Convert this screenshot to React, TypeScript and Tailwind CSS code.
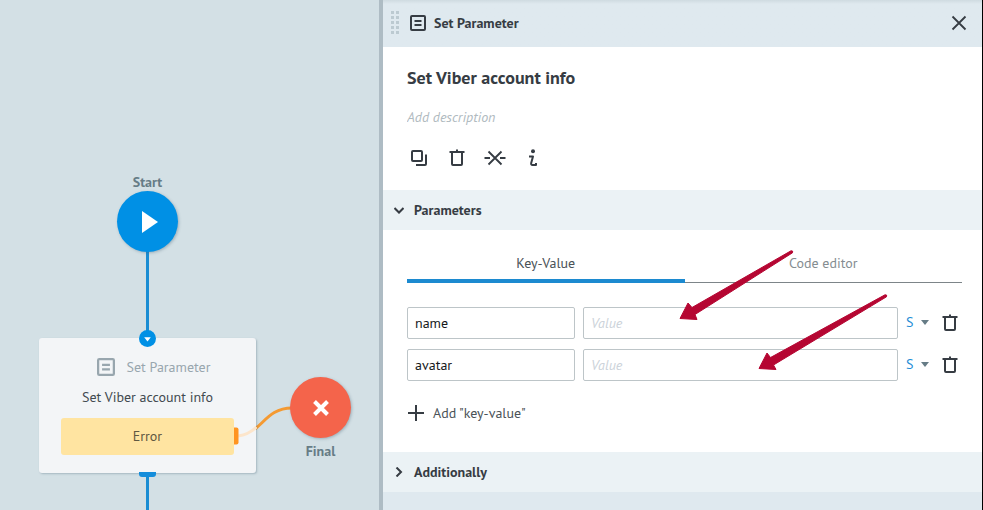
import { useState } from "react";

type Pair = { id: number; key: string; value: string };

function ListIcon({ className }: { className: string }) {
  return (
    <svg className={className} viewBox="0 0 16 16" fill="none" stroke="currentColor" strokeWidth="2" aria-hidden="true">
      <rect x="1" y="1" width="14" height="14" rx="1" />
      <path d="M4.500 6h7M4.500 10h7" />
    </svg>
  );
}

function TrashIcon() {
  return (
    <svg className="h-[18px] w-4" viewBox="0 0 16 18" fill="none" stroke="currentColor" strokeWidth="2" aria-hidden="true">
      <path d="M0.500 3h15M8 0.500v3" />
      <path d="M3 4v11q0 1 1 1h8q1 0 1-1V4" />
    </svg>
  );
}

function CopyIcon() {
  return (
    <svg className="size-4" viewBox="0 0 16 16" fill="none" stroke="currentColor" strokeWidth="2" aria-hidden="true">
      <rect x="1" y="1" width="10" height="10" rx="1" />
      <path d="M15 4.500V14q0 1-1 1H5" />
    </svg>
  );
}

function DetachIcon() {
  return (
    <svg className="h-4 w-[22px]" viewBox="0 0 22 16" fill="none" stroke="currentColor" strokeWidth="2" aria-hidden="true">
      <path d="M4.500 1.500l13 13M17.500 1.500l-13 13" strokeWidth="1.800" />
      <path d="M0.500 8H6M16 8h5.500" />
    </svg>
  );
}

function InfoIcon() {
  return (
    <svg className="h-[18px] w-2.5" viewBox="0 0 10 18" fill="none" stroke="currentColor" strokeWidth="2" aria-hidden="true">
      <circle cx="5" cy="2.300" r="2" fill="currentColor" stroke="none" />
      <path d="M1 7.500H5L3.200 14q-.4 2 1.300 2H8V14" strokeLinejoin="round" />
    </svg>
  );
}

function Canvas() {
  return (
    <main className="relative w-[379px] shrink-0 overflow-hidden bg-[#d3e0e5]">
      <svg className="absolute inset-0 h-full w-full" aria-hidden="true">
        <path d="M147.500 240V340M147.500 474V2000" stroke="#1a8dd3" strokeWidth="3" />
        <path d="M238 436C262 434 264 408 292 408" fill="none" stroke="#f49a32" strokeWidth="3" />
      </svg>

      <div className="absolute top-[173px] left-[117px] flex w-[61px] flex-col items-center">
        <span className="text-sm leading-[18px] font-bold text-[#667c86]">Start</span>
        <div className="flex size-[61px] items-center justify-center rounded-full bg-[#0090e5] shadow-[1px_1px_3px_rgba(60,90,110,0.35)]">
          <svg className="ml-1 h-[22px] w-4" viewBox="0 0 16 22" fill="white" aria-hidden="true">
            <path d="M0 0l16 11L0 22z" />
          </svg>
        </div>
      </div>

      <section className="absolute top-[338px] left-[39px] flex w-[217px] flex-col rounded-[3px] bg-[#f3f5f7] px-[22px] pt-[18px] pb-[18px] text-sm shadow-[1px_1px_2px_rgba(60,90,110,0.3)]">
        <header className="flex items-center justify-center gap-3 pl-3 text-[#98a6ae]">
          <ListIcon className="size-[18px]" />
          <span className="leading-[22px]">Set Parameter</span>
        </header>
        <p className="mt-2 text-center leading-[22px] text-[#424a50]">Set Viber account info</p>
        <div className="mt-2.5 rounded-[3px] bg-[#ffe4a1] text-center leading-[37px] text-[#5f5842]">Error</div>
      </section>
      <svg className="absolute top-[417px] left-[233px] h-[38px] w-6" viewBox="233 417 24 38" aria-hidden="true">
        <path d="M238 436Q249 434.500 256.500 427" fill="none" stroke="#fce5cb" strokeWidth="3" />
        <path d="M234 427.500h2.500q2 0 2 2v13q0 2-2 2H234z" fill="#ff9420" />
      </svg>
      <svg className="absolute top-[330px] left-[139px] size-[17px]" viewBox="0 0 17 17" aria-hidden="true">
        <circle cx="8.500" cy="8.500" r="8.500" fill="#0090e5" />
        <path d="M5.200 7.300h6.600L8.500 11.500z" fill="white" />
      </svg>
      <div className="absolute top-[472px] left-[139px] h-[5px] w-[17px] rounded-b-[3px] bg-[#148ddb]" />

      <div className="absolute top-[377px] left-[290px] flex w-[61px] flex-col items-center gap-1">
        <div className="flex size-[61px] items-center justify-center rounded-full bg-[#f4644b] shadow-[1px_1px_3px_rgba(60,90,110,0.35)]">
          <svg className="size-4" viewBox="0 0 16 16" stroke="white" strokeWidth="4" aria-hidden="true">
            <path d="M1.500 1.500l13 13M14.500 1.500l-13 13" />
          </svg>
        </div>
        <span className="text-sm leading-[18px] font-bold text-[#667c86]">Final</span>
      </div>
    </main>
  );
}

function PairRow({ pair }: { pair: Pair }) {
  return (
    <li className="flex items-center">
      <input
        aria-label="Key"
        defaultValue={pair.key}
        className="h-8 w-[168px] rounded-[2px] border border-[#bdc5c8] bg-white px-[7px] text-sm text-[#16191c] outline-none"
      />
      <input
        aria-label={`Value of ${pair.key}`}
        placeholder="Value"
        defaultValue={pair.value}
        className="ml-2 h-8 min-w-0 flex-1 rounded-[2px] border border-[#bdc5c8] bg-white px-[7px] text-sm outline-none placeholder:text-[#ccd3da] placeholder:italic"
      />
      <div className="relative ml-2 w-6 pb-0.5">
        <select aria-label="Type" className="block w-full appearance-none bg-transparent text-sm leading-5 text-[#1f8dd6] outline-none">
          <option>S</option>
        </select>
        <svg className="pointer-events-none absolute top-2 right-px h-[5px] w-2" viewBox="0 0 8 5" fill="#667c86" aria-hidden="true">
          <path d="M0 0h8L4 5z" />
        </svg>
      </div>
      <button type="button" aria-label="Delete" className="mr-1 ml-3 flex">
        <TrashIcon />
      </button>
    </li>
  );
}

export default function App() {
  const [pairs, setPairs] = useState<Pair[]>([
    { id: 1, key: "name", value: "" },
    { id: 2, key: "avatar", value: "" },
  ]);

  return (
    <div className="flex min-h-screen bg-[#d3e0e5] font-['PT_Sans','Noto_Sans',sans-serif] text-sm text-[#363c43]">
      <Canvas />
      <aside className="min-w-0 flex-1 border-r border-l-4 border-r-black border-l-[#aebcc4] bg-[#dfe9ef]">
        <header className="flex h-[47px] items-center bg-linear-to-b from-[#cfdbe1] to-[#dfe9ef] to-[4px] pr-[15px] pb-0.5 pl-2">
          <svg className="h-6 w-2" viewBox="0 0 8 24" fill="#bccad1" aria-hidden="true">
            {[0, 5, 10, 15, 20].map((y) => (
              <path key={y} d={`M0 ${y}h3v3h-3zM5 ${y}h3v3h-3z`} />
            ))}
          </svg>
          <ListIcon className="ml-[11px] size-4" />
          <h2 className="ml-2 flex-1 font-bold">Set Parameter</h2>
          <button type="button" aria-label="Close" className="flex">
            <svg className="size-4" viewBox="0 0 16 16" stroke="currentColor" strokeWidth="1.800" aria-hidden="true">
              <path d="M1.500 1.500l13 13M14.500 1.500l-13 13" />
            </svg>
          </button>
        </header>

        <section className="flex h-[143px] flex-col bg-white px-6 pt-5">
          <h1 className="text-lg leading-[22px] font-bold">Set Viber account info</h1>
          <input
            aria-label="Description"
            placeholder="Add description"
            className="mt-[18px] h-5 text-sm outline-none placeholder:text-[#b0bac0] placeholder:italic"
          />
          <div className="mt-[21px] flex h-5 items-center pl-1">
            <button type="button" aria-label="Copy" className="flex">
              <CopyIcon />
            </button>
            <button type="button" aria-label="Delete" className="ml-[22px] flex">
              <TrashIcon />
            </button>
            <button type="button" aria-label="Detach" className="ml-[19px] flex">
              <DetachIcon />
            </button>
            <button type="button" aria-label="Information" className="ml-[22px] flex">
              <InfoIcon />
            </button>
          </div>
        </section>

        <button type="button" className="flex h-10 w-full items-center gap-2.5 bg-[#ebf2f5] pl-[11px] font-bold">
          <svg className="h-2.5 w-2.5" viewBox="0 0 10 10" fill="none" stroke="currentColor" strokeWidth="2" aria-hidden="true">
            <path d="M0.500 3L5 7.500 9.500 3" />
          </svg>
          Parameters
        </button>

        <section className="relative bg-white pt-[22px] pr-5 pb-[29px] pl-6">
          <div role="tablist" className="flex items-end border-b border-[#7d8589]">
            <button type="button" role="tab" aria-selected="true" className="-mb-px flex-1 border-b-4 border-[#1c8ad0] pt-px pb-1.5 leading-5 text-[#4b5358]">
              Key-Value
            </button>
            <button type="button" role="tab" aria-selected="false" className="flex-1 pb-[9px] leading-5 text-[#858d91]">
              Code editor
            </button>
          </div>
          <ul className="mt-6 flex flex-col gap-2.5">
            {pairs.map((pair) => (
              <PairRow key={pair.id} pair={pair} />
            ))}
          </ul>
          <button
            type="button"
            onClick={() => setPairs([...pairs, { id: pairs.length + 1, key: "", value: "" }])}
            className="mt-[22px] ml-px flex items-center gap-[9px] leading-5 text-[#4b5358]"
          >
            <svg className="size-4" viewBox="0 0 16 16" stroke="#363c43" strokeWidth="2" aria-hidden="true">
              <path d="M0 8h16M8 0v16" />
            </svg>
            Add "key-value"
          </button>
          <svg className="pointer-events-none absolute top-0 left-0 h-[222px] w-[599px]" viewBox="383 230 599 222" fill="#b50632" stroke="#b50632" strokeLinejoin="round" aria-hidden="true">
            <path d="M680 318.500L688 303L692 307.500L791 250.800Q793.500 250.500 792.500 252.800L695 314.500L697 319.500z" />
            <path d="M759 368.500L767 353L770.500 357.500L885 294.800Q887.500 294.500 886.500 296.800L773.500 365L776 369.500z" />
          </svg>
        </section>

        <button type="button" className="flex h-10 w-full items-center gap-2.5 bg-[#ebf2f5] pl-[11px] font-bold">
          <svg className="h-2.5 w-2.5" viewBox="0 0 10 10" fill="none" stroke="currentColor" strokeWidth="2" aria-hidden="true">
            <path d="M2.500 0.500L7 5 2.500 9.500" />
          </svg>
          Additionally
        </button>
      </aside>
    </div>
  );
}
